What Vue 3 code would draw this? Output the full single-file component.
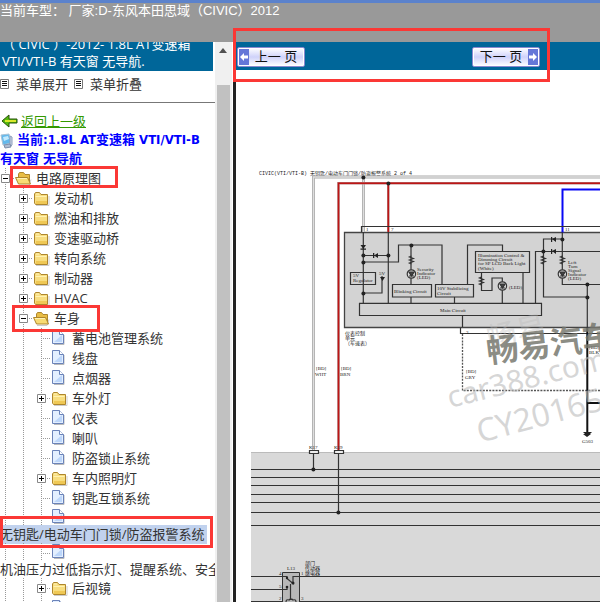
<script setup>
const tree = [
  { level: 0, kind: 'open', toggle: '-', label: '电路原理图', mark: 'mark-root' },
  { level: 1, kind: 'folder', toggle: '+', label: '发动机' },
  { level: 1, kind: 'folder', toggle: '+', label: '燃油和排放' },
  { level: 1, kind: 'folder', toggle: '+', label: '变速驱动桥' },
  { level: 1, kind: 'folder', toggle: '+', label: '转向系统' },
  { level: 1, kind: 'folder', toggle: '+', label: '制动器' },
  { level: 1, kind: 'folder', toggle: '+', label: 'HVAC' },
  { level: 1, kind: 'open', toggle: '-', label: '车身', mark: 'mark-body' },
  { level: 2, kind: 'page', label: '蓄电池管理系统' },
  { level: 2, kind: 'page', label: '线盘' },
  { level: 2, kind: 'page', label: '点烟器' },
  { level: 2, kind: 'folder', toggle: '+', label: '车外灯' },
  { level: 2, kind: 'page', label: '仪表' },
  { level: 2, kind: 'page', label: '喇叭' },
  { level: 2, kind: 'page', label: '防盗锁止系统' },
  { level: 2, kind: 'folder', toggle: '+', label: '车内照明灯' },
  { level: 2, kind: 'page', label: '钥匙互锁系统' },
  { level: 2, kind: 'page', label: '无钥匙/电动车门门锁/防盗报警系统', wrapped: true, selected: true, mark: 'mark-selected' },
  { level: 2, kind: 'page', label: '机油压力过低指示灯、提醒系统、安全带', wrapped: true },
  { level: 2, kind: 'folder', toggle: '+', label: '后视镜' },
  { level: 2, kind: 'page', label: '多路集成控制系统' }
]

const busLines = [469, 477, 485, 494, 502, 512, 525]
const lamps = [[411, 274], [502, 286], [562, 274]]
const joints = [
  [363, 177], [388, 183], [363, 255], [363, 262], [388, 255], [363, 293], [411, 245],
  [562, 239], [543, 251], [587, 284], [587, 297], [313, 469], [338, 512]
]
const resistors = [[411, 256], [543, 256], [562, 256], [481, 277]]
</script>

<template>
  <div class="page">
    <header class="top">
      <h1>当前车型： 厂家:D-东风本田思域（CIVIC）2012</h1>
    </header>
    <div class="frames">
      <aside class="side">
        <div class="side-body">
          <div class="car-title"><p>（ CIVIC ）-2012- 1.8L AT变速箱<br>VTI/VTI-B 有天窗 无导航.</p></div>
          <div class="menu-tools">
            <a v-for="t in ['菜单展开', '菜单折叠']" :key="t" href="#">
              <svg width="9" height="10" viewBox="0 0 9 10"><path d="M.5.5h8v9h-8z" fill="#fff" stroke="#777" /><path d="M2 2.500h5M2 4.500h5M2 6.500h5" stroke="#111" /></svg>
              {{ t }}
            </a>
          </div>
          <div class="back">
            <svg width="17" height="14" viewBox="0 0 17 14"><path d="M1 7l7-6v4h8v4H8v4z" fill="#55b80d" stroke="#28520b" /><path d="M4 7h11" stroke="#d9e92c" stroke-width="2" /></svg>
            <a href="#">返回上一级</a>
          </div>
          <p class="current">
            <svg width="13" height="16" viewBox="0 0 13 16"><path d="M1 2l8-1 2 9-8 2z" fill="#63b9ec" stroke="#a9c2d5" /><path d="M3 4l5-1 1 3-5 2z" fill="#c2eafe" /><path d="M10 3l2 1v8l-2 2z" fill="#ced8e7" stroke="#8b9cbb" /><path d="M4 12l6-1 1 3-6 1z" fill="#aebdd2" stroke="#7d8eaa" /></svg>
            当前:1.8L AT变速箱 VTI/VTI-B<br>有天窗 无导航
          </p>
          <ul class="tree">
            <li v-for="n in tree" :key="n.label" :class="{ wrapped: n.wrapped }">
              <div class="node">
                <span v-for="i in n.level + 1" :key="i" class="guide" :class="{ first: i === 1, branch: i === n.level + 1 }">
                  <button v-if="n.toggle && i === n.level + 1" type="button" class="toggle" :aria-label="n.label">
                    <svg width="9" height="9" viewBox="0 0 9 9"><path d="M.5.5h8v8h-8z" fill="#fff" stroke="#888" /><path :d="n.toggle === '+' ? 'M2 4.500h5M4.500 2v5' : 'M2 4.500h5'" stroke="#000" /></svg>
                  </button>
                </span>
                <svg class="icon" width="18" height="18" viewBox="0 0 18 18">
                  <template v-if="n.kind === 'page'">
                    <path d="M4 15.500h10V6" fill="none" stroke="#bbb" />
                    <path d="M2.500 1.500h7l4 4v9h-11z" fill="#e3efff" stroke="#6b83b9" />
                    <path d="M4 13l8-7v7z" fill="#bcd6fa" />
                    <path d="M9.500 1.500v4h4" fill="#fff" stroke="#6b83b9" />
                  </template>
                  <template v-else-if="n.kind === 'folder'">
                    <path d="M4 16.500h13V7" fill="none" stroke="#ccc" />
                    <path d="M2.500 14V5l1-1.500h4L9 5.500h6.500V15.500h-12z" fill="#f8de80" stroke="#ae862d" />
                    <path d="M4 5h3M3.500 7.500h11" stroke="#fff2b4" />
                    <path d="M4 12h11v3H4z" fill="#efc855" />
                  </template>
                  <template v-else>
                    <path d="M5 16.500h10l2-6" fill="none" stroke="#ccc" />
                    <path d="M4.500 13V5l1-1.500h4L11 5.500h4.500v9h-11z" fill="#e9bd45" stroke="#ae862d" />
                    <path d="M1.500 8.500h12l3 6.500h-12z" fill="#f8dc73" stroke="#ae862d" />
                    <path d="M3 9.500h10" stroke="#fff2b4" />
                  </template>
                </svg>
                <a v-if="!n.wrapped" href="#">{{ n.label }}</a>
              </div>
              <a v-if="n.wrapped" href="#" class="long" :class="{ selected: n.selected }">{{ n.label }}</a>
              <i v-if="n.mark" class="mark" :class="n.mark"></i>
            </li>
          </ul>
        </div>
        <div class="scrollbar">
          <svg width="17" height="17" viewBox="0 0 17 17"><path d="M4 11l4-5 4 5z" fill="#505050" /></svg>
          <div class="thumb"></div>
        </div>
      </aside>
      <main>
        <nav class="pager">
          <button type="button" class="page-button"><span class="arrow"><svg width="8" height="10" viewBox="0 0 8 10"><path d="M0 5l4-4v2.500h4v3H4V9z" fill="#fff" /></svg></span><span class="caption">上一 页</span></button>
          <button type="button" class="page-button"><span class="caption">下一 页</span><span class="arrow"><svg width="8" height="10" viewBox="0 0 8 10"><path d="M8 5L4 1v2.500H0v3h4V9z" fill="#fff" /></svg></span></button>
          <i class="mark mark-pager"></i>
        </nav>
        <svg class="diagram" viewBox="236 70 364 532">
          <text x="259" y="175" class="mono">CIVIC(VTI/VTI-B) 无钥匙/电动车门门锁/防盗报警系统 2 of 4</text>
          <path d="M251 452.500h349V602H251z" fill="#d9d9d9" />
          <path d="M251 452.500h349" stroke="#bbb" />
          <path d="M344.500 232.500H601v95H344.500z" fill="#d3d3d3" stroke="#444" stroke-width="1.300" />

          <g fill="none">
            <path d="M313.500 452V177H600M363.500 177v55" stroke="#aaa" stroke-width="3" />
            <path d="M313.500 452V177H600M363.500 177v55" stroke="#dedede" stroke-width="1.400" />
            <path d="M338.500 452V183.300H600M388.300 183v49" stroke="#b58080" stroke-width="2.600" />
            <path d="M338.500 452V183.300H600M388.300 183v49" stroke="#bd1515" stroke-width="1.400" />
            <path d="M562.500 233v-43.500H600" stroke="#0808f5" stroke-width="2" />
          </g>

          <g class="wire">
            <path d="M361.500 232v-5.500H600M363.300 232v71M388.300 232v71M363 255.500h25M363 262h35.500v-17H442v39" />
            <path d="M411 245v39M411 297v6M363 293h19v-17M454.500 297v6M467.500 284v-39h35v6" />
            <path d="M481.500 272v18.500h10.500V278h10.300v25M523 272v31M535.500 303v-51.500H600" />
            <path d="M562.300 232v52.500H600M562 239h-18.500v58H587M587.300 284v48M462.500 315v12M460.500 328v5.500H600" />
            <path d="M350.500 272.500h25v12h-25zM392.500 284.500h39V297h-39zM435.500 284.500h38V297h-38zM475.500 251.500h54v21h-54zM359.500 303.300h182v12.200h-182z" />
            <path d="M309.500 450.500h9v3h-9zM334.500 450.500h9v3h-9zM313.500 453v16M338.500 453v59" fill="#eee" />
            <path v-for="y in busLines" :key="y" :d="`M251 ${y + .5}h349`" />
            <path d="M251 576.500h31M299 576.500h301M251 589.500h35M251 601.500h31M299 601.500h301" />
          </g>
          <path d="M462.500 334v56.500H600" fill="none" stroke="#555" stroke-width="1.300" stroke-dasharray="2 1.200" />
          <path d="M587.300 328v104M587 403h13" stroke="#111" stroke-width="2" />
          <path d="M583 432h9l-2 2h1l-4 3-4-3h2z" fill="#222" />
          <path d="M282.500 572.500h17V603h-17z" fill="#b8b8b8" stroke="#333" />
          <g class="wire">
            <path d="M282 576.500h5v2l6 5v-7h7M282 589.500h5v-3M290.500 584v16M286 602q0-3 3-2 2-2 4 0 3-1 3 2" />
          </g>
          <g fill="#222">
            <circle v-for="j in joints" :key="j.join()" :cx="j[0] + .4" :cy="j[1] + .4" r="2" />
            <path d="M360.500 245h5.500l-2.700 4zM360.500 248.500h5.500v1.200h-5.500zM378 253v5l-4-2.500zM373 253h1.300v5H373zM556 237v5l-4-3zM551 237h1.200v5H551zM556 249v5l-4-3zM551 249h1.200v5H551zM380 277h5l-2.500 4z" />
            <circle cx="287" cy="578" r="1.200" /><circle cx="293" cy="583" r="1.500" /><circle cx="287" cy="587" r="1.300" />
          </g>
          <path v-for="r in resistors" :key="r.join()" :d="`M${r[0] + .4} ${r[1]}l-2 1 4 1.500-4 1.500 4 1.500-4 1.500 2 1`" class="wire" />
          <g v-for="l in lamps" :key="l.join()" class="wire">
            <circle :cx="l[0] + .4" :cy="l[1]" r="4.200" fill="#ddd" />
            <path :d="`M${l[0] - 2} ${l[1] - 2}h5l-2.500 4zM${l[0] - 2} ${l[1] + 2}h5`" fill="#444" />
          </g>

          <g class="small">
            <text x="366" y="231">1</text><text x="391" y="231">7</text><text x="565" y="231">11</text>
            <text x="353" y="277">5V</text><text x="353" y="282">Regulator</text><text x="379" y="275">5V</text>
            <text x="417" y="271">Security</text><text x="417" y="275">Indicator</text><text x="417" y="279">(LED)</text>
            <text x="394" y="293">Blinking Circuit</text>
            <text x="437" y="290">10V Stabilizing</text><text x="437" y="295">Circuit</text>
            <text x="478" y="257">Illumination Control &amp;</text><text x="478" y="261">Dimming Circuit</text>
            <text x="478" y="265">for SP LCD Back Light</text><text x="478" y="270">(White)</text>
            <text x="509" y="289">(LED)</text><text x="440" y="312">Main Circuit</text>
            <text x="568" y="264">Left</text><text x="568" y="268">Turn</text><text x="568" y="272">Signal</text>
            <text x="568" y="276">Indicator</text><text x="568" y="280">(LED)</text>
            <text x="345" y="335">仪表控制</text><text x="345" y="340">单元</text><text x="345" y="345">（车速表）</text>
            <text x="316" y="370">[BD]</text><text x="315" y="376">WHT</text><text x="341" y="370">[BD]</text><text x="340" y="376">BRN</text>
            <text x="466" y="373">[BD]</text><text x="465" y="379">GRY</text><text x="466" y="334">3</text>
            <text x="589" y="349">[BD]</text><text x="589" y="354">BLK</text><text x="582" y="443">G503</text>
            <text x="309" y="449">K17</text><text x="334" y="449">K19</text><text x="287" y="570">L13</text>
            <text x="279" y="575">4</text><text x="301" y="575">1</text><text x="279" y="588">5</text><text x="279" y="600">2</text><text x="301" y="600">3</text>
            <text x="305" y="565">部门</text><text x="305" y="570">传动器</text><text x="305" y="575">继电器</text>
          </g>

          <g class="watermark">
            <text transform="translate(490 350) rotate(-14)" class="ghost">畅易</text>
            <text transform="translate(488 363) rotate(-7)" class="brand">畅易汽车</text>
            <text transform="translate(450 408) rotate(-14)" class="site">car388.com</text>
            <text transform="translate(480 443) rotate(-15)" class="code">CY20165</text>
          </g>
        </svg>
      </main>
    </div>
  </div>
</template>

<style>
body { margin: 0; }
</style>

<style scoped>
* { box-sizing: border-box; }
.page {
  height: 100vh;
  display: flex;
  flex-direction: column;
  overflow: hidden;
  background: #fff;
  color: #333;
  font: 13px/20px "Open Sans", "Noto Sans CJK SC", sans-serif;
}
h1, p, ul { margin: 0; padding: 0; }
a { color: inherit; text-decoration: none; }
button { margin: 0; padding: 0; border: 0; background: none; font: inherit; }
.top { flex: none; height: 42px; border-top: 3px solid #5b82cc; background: #999; }
h1 {
  color: #fff;
  font: 13px/15px "Liberation Sans", "Noto Sans CJK SC", sans-serif;
  white-space: pre;
}
.frames { flex: 1; display: flex; min-height: 0; }
.side { flex: none; width: 236px; display: flex; border-right: 3px solid #222; overflow: hidden; }
.side-body { width: 215px; overflow: hidden; white-space: nowrap; }
.car-title {
  height: 29px;
  margin-right: 2px;
  padding: 0 0 1px 2px;
  display: flex;
  align-items: flex-end;
  overflow: hidden;
  background: #069;
  color: #fff;
}
.car-title p { line-height: 17px; }
.menu-tools { display: flex; align-items: flex-start; gap: 6px; height: 32px; padding-top: 3px; border-bottom: 1px solid #777; }
.menu-tools a { display: flex; align-items: center; gap: 7px; }
.back { display: flex; align-items: center; gap: 3px; height: 27px; padding: 9px 0 0 1px; color: #390; }
.back a { text-decoration: underline; }
.current {
  color: #00f;
  font-family: "DejaVu Sans Condensed", "Open Sans", "Noto Sans CJK SC", sans-serif;
  font-weight: 700;
  line-height: 19px;
}
.current svg { margin: -2px 0; vertical-align: middle; }
.tree { list-style: none; }
.tree li { position: relative; height: 20px; }
.tree li.wrapped { height: 35px; }
.node { display: flex; align-items: center; height: 20px; }
.wrapped .node { height: 17px; }
.guide {
  flex: none;
  display: flex;
  align-items: center;
  width: 18px;
  height: 100%;
  padding-left: 5px;
  background: repeating-linear-gradient(#999 0 1px, transparent 1px 2px) 9px 0 / 1px 100% no-repeat;
}
.guide.first { width: 14px; padding-left: 1px; background-position-x: 5px; }
.guide.branch {
  background-image: repeating-linear-gradient(#999 0 1px, transparent 1px 2px), repeating-linear-gradient(90deg, #999 0 1px, transparent 1px 2px);
  background-position: 9px 0, 9px 10px;
  background-size: 1px 100%, 9px 1px;
}
.guide.first.branch { background-position: 5px 0, 5px 10px; }
.toggle { display: flex; }
.icon { flex: none; margin-right: 4px; }
.long { display: block; width: max-content; height: 19px; line-height: 19px; }
.long.selected { background: #c1d2ee; padding-right: 2px; }
.scrollbar { width: 17px; background: #f0f0f0; display: flex; flex-direction: column; }
.scrollbar svg { margin-bottom: 26px; }
.thumb { flex: 1; margin: 0 2px; background: #c1c1c1; }
main { flex: 1; min-width: 0; }
.pager {
  position: relative;
  display: flex;
  align-items: center;
  justify-content: space-between;
  height: 28px;
  padding: 1px 60px 0 1px;
  background: #069;
}
.page-button {
  display: flex;
  height: 20px;
  width: 68px;
  padding: 1px;
  border: 1px solid #8989cf;
  border-radius: 2px;
  background: linear-gradient(#fff, #cfd2fa 50%, #fff);
  box-shadow: inset 0 0 0 1px #fff;
  color: #111;
}
.arrow { flex: none; display: flex; align-items: center; justify-content: center; width: 10px; background: #6577d8; }
.caption { flex: 1; font: 13px/16px "Liberation Sans", "Noto Sans CJK SC", sans-serif; text-align: center; }
.mark { position: absolute; z-index: 2; border: 3px solid #fb3835; pointer-events: none; }
.mark-root { left: 10px; top: -2px; width: 108px; height: 22px; }
.mark-body { left: 12px; top: -3px; width: 88px; height: 27px; }
.mark-selected { left: 0; top: 8px; width: 213px; height: 32px; }
.mark-pager { left: -3px; top: -14px; right: 50px; height: 54px; }
.diagram { display: block; width: 100%; }
.wire { fill: none; stroke: #333; stroke-width: 1.2; }
.mono { font: 5px "Liberation Mono", "Noto Sans CJK SC", monospace; fill: #222; }
.small { font: 5px "Liberation Serif", "Noto Sans CJK SC", serif; fill: #222; }
.brand { font: 700 32px "Noto Sans CJK SC", sans-serif; fill: #77786f; fill-opacity: .85; }
.ghost { font: 30px "Noto Sans CJK SC", sans-serif; fill: #bbb; fill-opacity: .4; }
.site { font: 30px "Noto Sans", sans-serif; fill: #bbb; fill-opacity: .6; }
.code { font: 32px "Noto Sans", sans-serif; fill: #bbb; fill-opacity: .6; }
</style>
